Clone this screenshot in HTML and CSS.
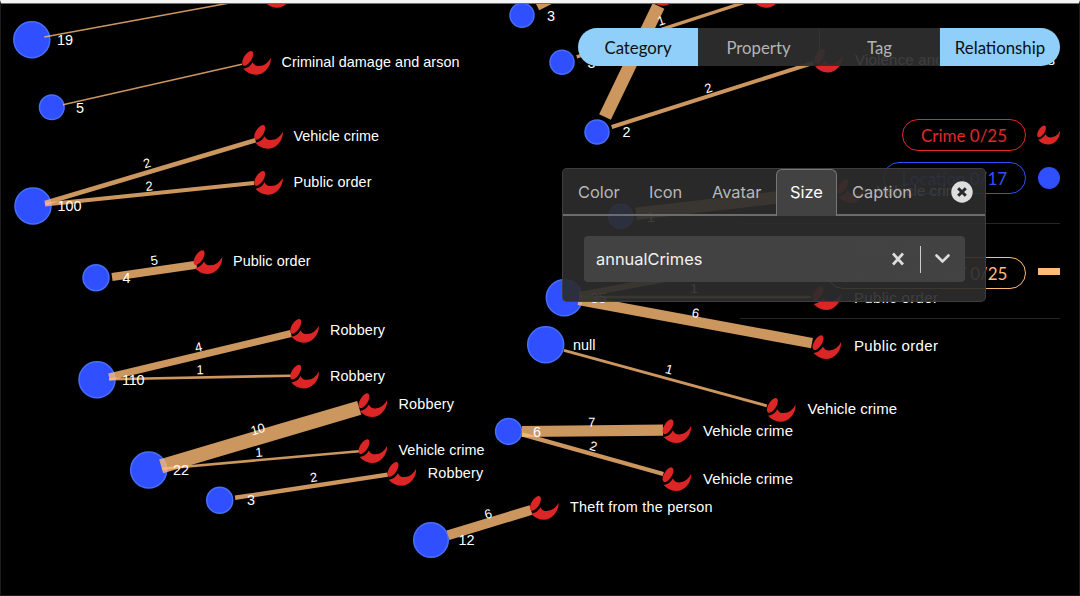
FILE: index.html
```html
<!DOCTYPE html>
<html lang="en">
<head>
<meta charset="utf-8">
<title>Crime graph</title>
<link rel="stylesheet" href="styles.css">
</head>
<body>
<main class="stage">
<svg class="graph" width="1080" height="596" viewBox="0 0 1080 596">
  <defs>
    <symbol id="crime" viewBox="0 0 30 24" overflow="visible">
      <ellipse cx="5.7" cy="7.4" rx="3.9" ry="8.3" transform="rotate(32 5.7 7.4)"/>
      <path d="M1.4 17.8Q7.6 16.8 10.6 11.2Q12.5 15.2 17 15.1Q25 14.5 28.8 6.7Q29.3 13 24.5 18.8Q20 23.8 13.8 23.8Q6 23.3 1.4 17.8Z"/>
    </symbol>
  </defs>
  <g class="nodes">
    <circle cx="31.8" cy="39.8" r="18"/><circle cx="51.8" cy="107.3" r="12.3"/>
    <circle cx="33" cy="206" r="18"/><circle cx="96" cy="277.7" r="13"/>
    <circle cx="97" cy="379.8" r="18"/><circle cx="148.7" cy="470" r="18"/>
    <circle cx="219.7" cy="500.3" r="13"/><circle cx="431" cy="540" r="17.3"/>
    <circle cx="545.7" cy="344.8" r="18"/><circle cx="508.6" cy="431.4" r="13"/>
    <circle cx="564.3" cy="297.7" r="18"/><circle cx="522" cy="15.3" r="12"/>
    <circle cx="562" cy="62.3" r="12"/><circle cx="597" cy="132" r="12"/>
    <circle cx="620.7" cy="216.3" r="12"/>
  </g>
  <g class="edges">
    <path stroke-width="1.5" d="M44.3 37L235 2M63 104.8L242 64.3"/>
    <path stroke-width="4.6" d="M45 203L255.5 140.2"/>
    <path stroke-width="4.2" d="M45 204.5L254 183"/>
    <path stroke-width="8" d="M112 277L196.5 264.8"/>
    <path stroke-width="7" d="M109 377L291 333.5"/>
    <path stroke-width="2.6" d="M109 379.2L291 375.7"/>
    <path stroke-width="14.4" d="M161.2 466.3L359.2 407.8"/>
    <path stroke-width="2.6" d="M162 468.7L359 451.2"/>
    <path stroke-width="4.4" d="M235 497.8L387.7 474.6"/>
    <path stroke-width="10" d="M448 535.2L531 510"/>
    <path stroke-width="11.2" d="M522 431.5L663 430.2"/>
    <path stroke-width="4.4" d="M522 434.4L663.3 474"/>
    <path stroke-width="2.8" d="M564 350.3L766.8 405.8"/>
    <path stroke-width="10.5" d="M578.5 299.8L812 343.2"/>
    <path stroke-width="2.8" d="M579 297.2L811 297.2"/>
    <path stroke-width="6" d="M579 295L812 252"/>
    <path stroke-width="12.5" d="M636 213.7L834 191"/>
    <path stroke-width="13" d="M605 117L658.5 6"/>
    <path stroke-width="4" d="M611.7 127L813.3 62.8"/>
    <path stroke-width="3.4" d="M576.7 56.8L752 0"/>
    <path stroke-width="12" d="M536.5 5L560 -7"/>
  </g>
  <g class="crimes">
    <use href="#crime" x="263" y="-16" width="30" height="24"/>
    <use href="#crime" x="649" y="-18" width="30" height="24"/>
    <use href="#crime" x="752.5" y="-16" width="30" height="24"/>
    <use href="#crime" x="242" y="51" width="30" height="24"/>
    <use href="#crime" x="254" y="125" width="30" height="24"/>
    <use href="#crime" x="254" y="171" width="30" height="24"/>
    <use href="#crime" x="193.4" y="250.2" width="30" height="24"/>
    <use href="#crime" x="290" y="319" width="30" height="24"/>
    <use href="#crime" x="290" y="364.7" width="30" height="24"/>
    <use href="#crime" x="358.3" y="393.3" width="30" height="24"/>
    <use href="#crime" x="358.3" y="439.2" width="30" height="24"/>
    <use href="#crime" x="387.3" y="462" width="30" height="24"/>
    <use href="#crime" x="529.7" y="496" width="30" height="24"/>
    <use href="#crime" x="662.3" y="419.3" width="30" height="24"/>
    <use href="#crime" x="662.3" y="467.3" width="30" height="24"/>
    <use href="#crime" x="766.7" y="398" width="30" height="24"/>
    <use href="#crime" x="812.3" y="335.3" width="30" height="24"/>
    <use href="#crime" x="812.3" y="286.3" width="30" height="24"/>
    <use href="#crime" x="812.3" y="237" width="30" height="24"/>
    <use href="#crime" x="837" y="179" width="30" height="24"/>
    <use href="#crime" x="813.8" y="48.8" width="30" height="24"/>
  </g>
  <g class="labels">
    <text x="281.5" y="67" textLength="178">Criminal damage and arson</text>
    <text x="293.5" y="141" textLength="85.5">Vehicle crime</text>
    <text x="293.5" y="187" textLength="78">Public order</text>
    <text x="233" y="266" textLength="77.5">Public order</text>
    <text x="330" y="335" textLength="55">Robbery</text>
    <text x="330" y="381" textLength="55">Robbery</text>
    <text x="398.5" y="409.3" textLength="55.5">Robbery</text>
    <text x="398.5" y="455" textLength="86">Vehicle crime</text>
    <text x="427.7" y="478" textLength="55.5">Robbery</text>
    <text x="570" y="512" textLength="142.5">Theft from the person</text>
    <g class="large">
      <text x="703" y="435.5" textLength="90">Vehicle crime</text>
      <text x="703" y="483.5" textLength="90">Vehicle crime</text>
      <text x="807.5" y="414.3" textLength="89.5">Vehicle crime</text>
      <text x="854" y="351.3" textLength="84">Public order</text>
      <text x="854" y="302.5" textLength="84">Public order</text>
      <text x="854" y="253.3" textLength="84">Public order</text>
      <text x="876.5" y="195.5" textLength="90">Vehicle crime</text>
      <text x="855" y="65.3" textLength="200">Violence and sexual offences</text>
    </g>
    <text x="57" y="44.8">19</text><text x="76" y="112.5">5</text>
    <text x="57.5" y="211">100</text><text x="122.5" y="283">4</text>
    <text x="122" y="384.8" textLength="22.5">110</text><text x="173" y="475.3">22</text>
    <text x="247" y="505.3">3</text><text x="458.5" y="545.3">12</text>
    <text x="573" y="350">null</text><text x="533" y="436.7">6</text>
    <text x="590.5" y="303">35</text><text x="647" y="221.5">1</text>
    <text x="547" y="20.6">3</text><text x="587.5" y="67.5">3</text>
    <text x="622.5" y="137.3">2</text>
  </g>
  <g class="weights">
    <text transform="translate(147 163) rotate(-16.7)" y="4.6">2</text>
    <text transform="translate(149 186) rotate(-6)" y="4.6">2</text>
    <text transform="translate(154.3 260.3) rotate(-8)" y="4.6">5</text>
    <text transform="translate(198.5 347) rotate(-13)" y="4.6">4</text>
    <text transform="translate(200 369.5) rotate(-1)" y="4.6">1</text>
    <text transform="translate(257.8 429) rotate(-16.5)" y="4.6">10</text>
    <text transform="translate(259 452) rotate(-5)" y="4.6">1</text>
    <text transform="translate(313.7 477.2) rotate(-8.6)" y="4.6">2</text>
    <text transform="translate(488 513.8) rotate(-17)" y="4.6">6</text>
    <text transform="translate(591.7 422) rotate(-1)" y="4.6">7</text>
    <text transform="translate(593.5 446) rotate(15.7)" y="4.6">2</text>
    <text transform="translate(669.3 369.2) rotate(15.3)" y="4.6">1</text>
    <text transform="translate(695.7 313) rotate(10.5)" y="4.6">6</text>
    <text transform="translate(694 288.5)" y="4.6">1</text>
    <text transform="translate(708.3 88) rotate(-17.7)" y="4.6">2</text>
    <text transform="translate(661 20.5) rotate(-18)" y="4.6">1</text>
  </g>
</svg>

<aside class="legend">
  <div class="legend-group categories">
    <div class="legend-row crime"><span class="pill">Crime 0/25</span>
      <svg class="key" width="24" height="20" viewBox="0 0 30 24"><use href="#crime" width="30" height="24"/></svg></div>
    <div class="legend-row location"><span class="pill">Location 0/17</span><span class="key dot"></span></div>
  </div>
  <div class="legend-group relations">
    <div class="legend-row relation"><span class="pill">OCCURRED_AT 0/25</span><span class="key bar"></span></div>
  </div>
</aside>

<nav class="switcher">
  <span class="segment on">Category</span><span class="segment">Property</span><span class="segment">Tag</span><span class="segment on">Relationship</span>
</nav>

<section class="panel">
  <div class="tabs">
    <span class="tab color">Color</span><span class="tab icon">Icon</span><span class="tab avatar">Avatar</span><span class="tab active">Size</span><span class="tab caption">Caption</span>
    <span class="close"><svg width="22" height="22" viewBox="0 0 22 22"><circle cx="11" cy="11" r="10.7" fill="#dedede"/><path d="M7.2 7.2L14.8 14.8M14.8 7.2L7.2 14.8" stroke="#292929" stroke-width="3"/></svg></span>
  </div>
  <div class="select">
    <span class="value">annualCrimes</span>
    <svg class="clear" width="12" height="14" viewBox="0 0 12 14"><path d="M1 1.5L11 12.5M11 1.5L1 12.5" stroke="#ddd" stroke-width="2.7"/></svg>
    <span class="rule"></span>
    <svg class="chevron" width="15" height="10" viewBox="0 0 15 10"><path d="M1.5 1.5L7.5 7.5L13.5 1.5" fill="none" stroke="#ddd" stroke-width="2.6" stroke-linecap="round"/></svg>
  </div>
</section>
</main>
</body>
</html>
```
FILE: styles.css
```css
* { box-sizing: border-box; }
body { margin: 0; background: #000; }
.stage {
  position: relative;
  width: 1080px;
  height: 596px;
  overflow: hidden;
  background: #000;
}
.stage::before {
  content: "";
  position: absolute;
  z-index: 5;
  inset: 0;
  border: 1px solid #1c1c1c;
  border-top: 3px solid #f5f5f5;
  box-shadow: inset 0 1px #707070;
  pointer-events: none;
}
.graph { position: absolute; left: 0; top: 0; }
.nodes circle { fill: #304ffe; stroke: #4470fb; stroke-width: 1.5; }
.edges path { fill: none; stroke: #ffbb77; stroke-opacity: .8; }
.crimes { fill: #dc2626; }
.labels text { font: 14.4px "Liberation Sans", Arial, sans-serif; fill: #fff; }
.labels .large text { font-size: 15px; }
.weights text { font: 13px "Liberation Sans", Arial, sans-serif; fill: #fff; text-anchor: middle; }

.legend {
  position: absolute;
  top: 119px;
  right: 20px;
  width: 320px;
  font: 17px Lato, sans-serif;
}
.legend-group {
  display: flex;
  flex-direction: column;
  align-items: flex-end;
  gap: 11px;
  border-bottom: 1px solid #262626;
}
.categories { height: 105px; }
.relations { height: 95px; padding-top: 33px; }
.legend-row { display: flex; align-items: center; gap: 12px; height: 32px; }
.pill {
  height: 32px;
  line-height: 31px;
  border: 1.5px solid currentColor;
  border-radius: 16px;
  text-align: center;
  white-space: nowrap;
}
.crime { color: #e3272b; gap: 11px; }
.crime .pill { width: 124px; }
.crime .key { fill: #dc2626; margin-right: -1px; }
.location { color: #304ffe; }
.location .pill { width: 143px; }
.relation { color: #ffbb77; }
.relation .pill { width: 199px; }
.dot { width: 22px; height: 22px; border-radius: 50%; background: currentColor; }
.bar { width: 22px; height: 7px; background: currentColor; margin-top: -3px; }

.switcher {
  position: absolute;
  top: 28px;
  left: 578px;
  width: 482px;
  height: 38px;
  display: grid;
  grid-template-columns: 120px 122px 120px 120px;
  border-radius: 19px;
  overflow: hidden;
  font: 16.8px/39px Lato, sans-serif;
  text-align: center;
}
.segment { background: rgba(46, 46, 46, .93); color: #b4b4b4; border-right: 1px solid #333; }
.segment.on { background: #90cff9; color: #0a0f14; border: 0; }

.panel {
  position: absolute;
  top: 168px;
  left: 562px;
  width: 424px;
  height: 134px;
  border: 1px solid rgba(64, 64, 64, .9);
  border-radius: 5px;
  background: rgba(44, 44, 44, .92);
  font: 16.4px Inter, sans-serif;
  color: #b8b8b8;
}
.tabs { display: flex; height: 47px; }
.tab { line-height: 47px; border-bottom: 2px solid #6c6c6c; white-space: nowrap; }
.color { width: 86px; padding-left: 15px; }
.icon { width: 63px; }
.avatar { width: 64px; }
.active {
  width: 61px;
  border: 1.5px solid #777;
  border-bottom: 0;
  border-radius: 6px 6px 0 0;
  background: #424242;
  color: #fff;
  line-height: 45px;
  text-align: center;
}
.caption { width: 101px; padding-left: 15px; }
.close { flex: 1; padding: 12px 0 0 13px; border-bottom: 2px solid #6c6c6c; line-height: 0; }
.select {
  display: flex;
  align-items: center;
  width: 381px;
  height: 46px;
  margin: 20px 0 0 21px;
  padding: 0 15px 0 12px;
  border-radius: 4px;
  background: rgba(68, 68, 68, .93);
  color: #f2f2f2;
}
.value { flex: 1; }
.rule { width: 1.5px; height: 27px; margin: 0 14px 0 16px; background: #ccc; }
```
